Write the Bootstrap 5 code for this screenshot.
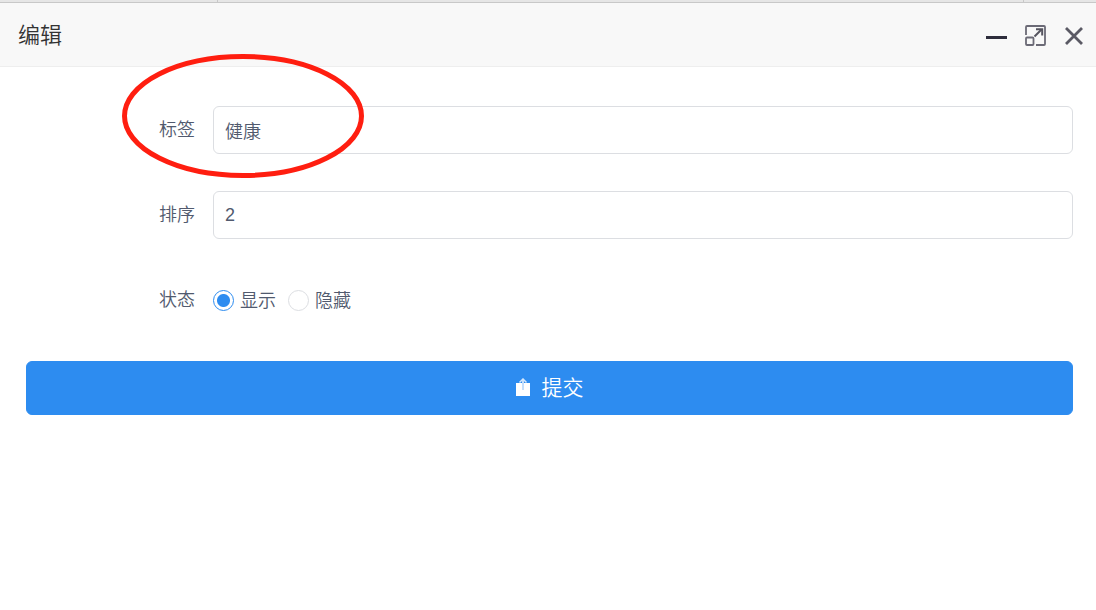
<!DOCTYPE html>
<html lang="zh-CN">
<head>
<meta charset="utf-8">
<meta name="viewport" content="width=device-width, initial-scale=1">
<title>编辑</title>
<link href="https://cdn.jsdelivr.net/npm/bootstrap@5.3.0/dist/css/bootstrap.min.css" rel="stylesheet">
<style>
  body { font-family: "Liberation Sans", "Noto Sans CJK SC", sans-serif; font-size: 18px; line-height: 24px; font-weight: 350; color: #515a6e; background: #fff; }
  .page-edge { height: 3px; background: #e6e6e6; border-bottom: 1px solid #c8c8c8; }
  .edge-tab { width: 218px; border-right: 1px solid #c8c8c8; }
  .edge-end { width: 73px; border-left: 1px solid #c8c8c8; }
  .dialog-head { height: 64px; padding: 3px 12px 0 18px; background: #f8f8f8; border-bottom: 1px solid #eee; }
  .dialog-title { font-size: 22px; line-height: 32px; font-weight: 350; color: #333; }
  .head-tools { gap: 17px; }
  .head-tools .btn { --bs-btn-padding-x: 0; --bs-btn-padding-y: 0; --bs-btn-border-width: 0; line-height: 1; }
  .head-tools svg, .submit-btn svg { display: block; }
  .dialog-body { padding: 39px 23px 24px 26px; }
  .field-row { min-height: 48px; margin-bottom: 37px; }
  .field-label { width: 187px; padding-right: 18px; padding-bottom: 1px; }
  .field-input.form-control { height: 48px; padding: 0 11px; border-color: #dcdee2; border-radius: 6px; font-size: 18px; font-weight: 350; color: #515a6e; }
  .choices { gap: 12px; }
  .choice { gap: 6px; }
  .choice label { padding-top: 2px; }
  .choice .form-check-input { width: 21px; height: 21px; border-color: #dcdee2; }
  .choice .form-check-input:checked { border-color: #2d8cf0; background: #fff radial-gradient(circle, #2d8cf0 6px, #fff 7px) border-box; }
  .submit-btn.btn { --bs-btn-bg: #2d8cf0; --bs-btn-border-color: #2d8cf0; --bs-btn-hover-bg: #57a3f3; --bs-btn-hover-border-color: #57a3f3; height: 54px; gap: 11px; border-radius: 6px; font-size: 21px; font-weight: 350; line-height: 32px; }
  .highlight-ring { top: 54px; left: 122px; pointer-events: none; }
</style>
</head>
<body>
<div class="page-edge d-flex justify-content-between"><span class="edge-tab"></span><span class="edge-end"></span></div>
<header class="dialog-head d-flex align-items-center justify-content-between">
  <h1 class="dialog-title m-0">编辑</h1>
  <div class="head-tools d-flex align-items-center">
    <button type="button" class="btn" aria-label="最小化">
      <svg width="22" height="22" viewBox="0 0 22 22"><path d="M0 12.500h21" stroke="#2e2d3c" stroke-width="3"/></svg>
    </button>
    <button type="button" class="btn" aria-label="最大化">
      <svg width="22" height="22" viewBox="0 0 22 22" fill="none" stroke="#6b6a76" stroke-width="1.800"><path d="M1 10V2q0-1 1-1h17q1 0 1 1v17q0 1-1 1h-8"/><rect x="1" y="12.500" width="7.500" height="7.500" rx="1"/><g stroke="#55545f" stroke-width="2"><path d="M9.500 11.500l7-7"/><path d="M11 4.200h6.200v6.300"/></g></svg>
    </button>
    <button type="button" class="btn" aria-label="关闭">
      <svg width="20" height="22" viewBox="0 0 20 22"><path d="M2 3l16 16M18 3L2 19" stroke="#5a5964" stroke-width="2.800"/></svg>
    </button>
  </div>
</header>
<main class="dialog-body">
  <form>
    <div class="field-row d-flex align-items-center">
      <label class="field-label text-end flex-shrink-0" for="tag">标签</label>
      <input class="field-input form-control" type="text" id="tag" value="健康">
    </div>
    <div class="field-row d-flex align-items-center">
      <label class="field-label text-end flex-shrink-0" for="order">排序</label>
      <input class="field-input form-control" type="text" id="order" value="2">
    </div>
    <div class="field-row d-flex align-items-center" role="radiogroup" aria-labelledby="state">
      <span class="field-label text-end flex-shrink-0" id="state">状态</span>
      <div class="choices d-flex">
        <div class="choice d-flex align-items-center">
          <input class="form-check-input m-0" type="radio" name="state" id="show" checked>
          <label for="show">显示</label>
        </div>
        <div class="choice d-flex align-items-center">
          <input class="form-check-input m-0" type="radio" name="state" id="hide">
          <label for="hide">隐藏</label>
        </div>
      </div>
    </div>
    <button type="submit" class="submit-btn btn btn-primary w-100 d-flex align-items-center justify-content-center">
      <svg width="15" height="20" viewBox="0 0 15 20"><path d="M0 5h14v13H0z" fill="#fff"/><path d="M7 12V2" stroke="#c4defb" stroke-width="2"/><path d="M3.500 4.500L7 1l3.500 3.500" fill="none" stroke="#d5e8fc" stroke-width="1.500"/></svg>
      <span>提交</span>
    </button>
  </form>
</main>
<svg class="highlight-ring position-absolute" width="242" height="125" viewBox="0 0 242 125" aria-hidden="true"><ellipse cx="121" cy="62" rx="118.500" ry="59.500" fill="none" stroke="#ff1e10" stroke-width="5"/></svg>
<script src="https://cdn.jsdelivr.net/npm/bootstrap@5.3.0/dist/js/bootstrap.bundle.min.js"></script>
</body>
</html>
